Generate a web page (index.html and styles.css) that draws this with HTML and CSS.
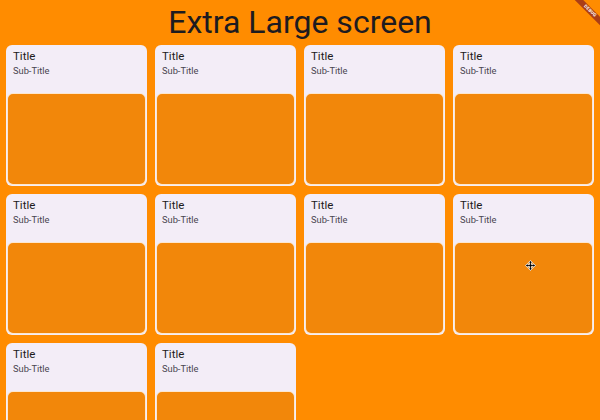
FILE: index.html
```html
<!DOCTYPE html>
<html>
<head>
<meta charset="utf-8">
<link rel="stylesheet" href="styles.css">
</head>
<body>
<div class="page">
  <h1 class="heading">Extra Large screen</h1>
  <div class="grid">
    <div class="card"><div class="card-head"><div class="card-title">Title</div><div class="card-sub">Sub-Title</div></div><div class="card-media"></div></div>
    <div class="card"><div class="card-head"><div class="card-title">Title</div><div class="card-sub">Sub-Title</div></div><div class="card-media"></div></div>
    <div class="card"><div class="card-head"><div class="card-title">Title</div><div class="card-sub">Sub-Title</div></div><div class="card-media"></div></div>
    <div class="card"><div class="card-head"><div class="card-title">Title</div><div class="card-sub">Sub-Title</div></div><div class="card-media"></div></div>
    <div class="card"><div class="card-head"><div class="card-title">Title</div><div class="card-sub">Sub-Title</div></div><div class="card-media"></div></div>
    <div class="card"><div class="card-head"><div class="card-title">Title</div><div class="card-sub">Sub-Title</div></div><div class="card-media"></div></div>
    <div class="card"><div class="card-head"><div class="card-title">Title</div><div class="card-sub">Sub-Title</div></div><div class="card-media"></div></div>
    <div class="card"><div class="card-head"><div class="card-title">Title</div><div class="card-sub">Sub-Title</div></div><div class="card-media"></div></div>
    <div class="card"><div class="card-head"><div class="card-title">Title</div><div class="card-sub">Sub-Title</div></div><div class="card-media"></div></div>
    <div class="card"><div class="card-head"><div class="card-title">Title</div><div class="card-sub">Sub-Title</div></div><div class="card-media"></div></div>
  </div>
  <div class="debug-banner">DEBUG</div>
  <svg class="cursor" width="11" height="11" viewBox="0 0 11 11">
    <path d="M5.5 0.5 L7.5 2.8 H6.4 V4.6 H8.2 V3.5 L10.5 5.5 L8.2 7.5 V6.4 H6.4 V8.2 H7.5 L5.5 10.5 L3.5 8.2 H4.6 V6.4 H2.8 V7.5 L0.5 5.5 L2.8 3.5 V4.6 H4.6 V2.8 H3.5 Z" fill="#000" stroke="#fff" stroke-width="0.8" stroke-linejoin="round"/>
  </svg>
</div>
</body>
</html>
```

FILE: styles.css
```css
html, body {
  margin: 0;
  padding: 0;
  width: 600px;
  height: 420px;
  overflow: hidden;
  background: #ff8c00;
  font-family: Roboto, "Noto Sans", sans-serif;
}

.page {
  position: relative;
  width: 600px;
  height: 420px;
  overflow: hidden;
}

.heading {
  margin: 0;
  height: 45px;
  box-sizing: border-box;
  padding-top: 3px;
  font-size: 32px;
  line-height: 38px;
  font-weight: 400;
  text-align: center;
  color: #1d1b20;
}

.grid {
  display: grid;
  grid-template-columns: repeat(4, 141px);
  grid-auto-rows: 141px;
  column-gap: 8px;
  row-gap: 8px;
  padding: 0 6px;
}

.card {
  display: flex;
  flex-direction: column;
  background: #f3edf7;
  border-radius: 6px;
  overflow: hidden;
}

.card-head {
  height: 48px;
  box-sizing: border-box;
  padding: 4px 6px 0 7px;
  flex: none;
}

.card-title {
  font-size: 11.5px;
  line-height: 14px;
  color: #1d1b20;
}

.card-sub {
  margin-top: 2px;
  font-size: 9.3px;
  line-height: 12px;
  color: #49454f;
}

.card-media {
  flex: 1;
  margin: 0 1px 1px;
  background: #f2870a;
  border: 1px solid rgba(255, 255, 255, 0.8);
  border-radius: 6px;
}

.debug-banner {
  position: absolute;
  top: 8px;
  right: -16px;
  width: 52px;
  height: 6px;
  transform: rotate(45deg);
  background: #ab3e16;
  color: #fff;
  font-size: 4.5px;
  font-weight: 700;
  line-height: 6px;
  text-align: center;
  letter-spacing: 0.2px;
}

.cursor {
  position: absolute;
  left: 525px;
  top: 260px;
}
```
